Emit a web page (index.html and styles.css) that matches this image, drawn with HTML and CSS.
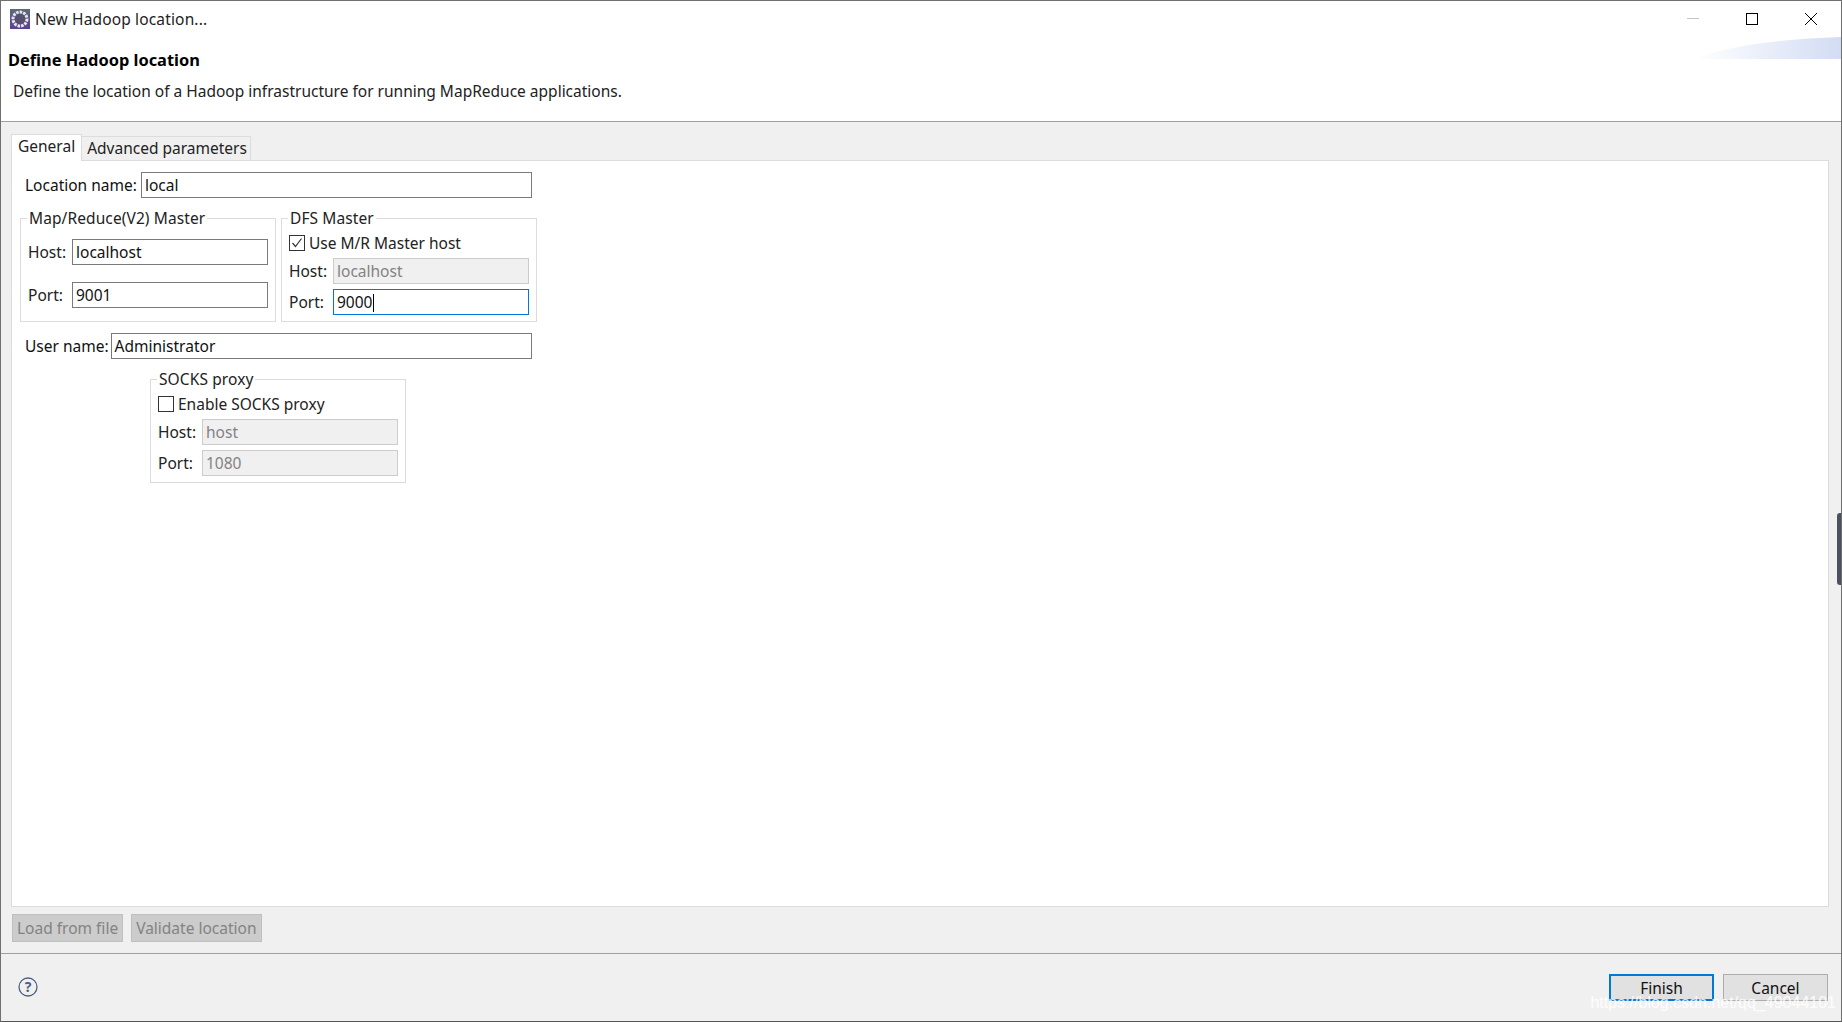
FILE: index.html
```html
<!DOCTYPE html>
<html>
<head>
  <meta charset="UTF-8">
  <title>New Hadoop location...</title>
  <link rel="stylesheet" href="styles.css">
</head>
<body>
  <div class="window">
    <div class="titlebar">
      <svg class="app-icon" width="20" height="20" viewBox="0 0 20 20">
        <defs>
          <linearGradient id="iconBg" x1="0" y1="0" x2="0" y2="1">
            <stop offset="0" stop-color="#5d6a78"/>
            <stop offset="1" stop-color="#5b3f96"/>
          </linearGradient>
        </defs>
        <rect width="20" height="20" fill="url(#iconBg)"/>
        <circle cx="10" cy="10" r="7" fill="none" stroke="#e8e8e8" stroke-width="3" stroke-dasharray="2.6 1"/>
        <circle cx="10" cy="10" r="5" fill="#56506e"/>
      </svg>
      <span class="title-text">New Hadoop location...</span>
      <div class="window-controls">
        <svg class="win-btn" width="14" height="14" viewBox="0 0 14 14"><path d="M1 6.5H13" stroke="#c4c4c4" fill="none"/></svg>
        <svg class="win-btn" width="14" height="14" viewBox="0 0 14 14"><rect x="1.5" y="1.5" width="11" height="11" stroke="#000" fill="none"/></svg>
        <svg class="win-btn" width="14" height="14" viewBox="0 0 14 14"><path d="M1 1L13 13M13 1L1 13" stroke="#000" fill="none"/></svg>
      </div>
    </div>

    <div class="header">
      <svg class="banner" width="146" height="22" viewBox="0 0 146 22">
        <defs>
          <linearGradient id="bannerBg" x1="0" y1="0" x2="1" y2="0">
            <stop offset="0" stop-color="#fff"/>
            <stop offset="1" stop-color="#d2dcf3"/>
          </linearGradient>
        </defs>
        <path d="M0 22C30 9 85 2 146 0V22Z" fill="url(#bannerBg)"/>
      </svg>
      <div class="heading">Define Hadoop location</div>
      <div class="description">Define the location of a Hadoop infrastructure for running MapReduce applications.</div>
    </div>

    <div class="content">
      <div class="tabs">
        <div class="tab active">General</div>
        <div class="tab">Advanced parameters</div>
      </div>

      <div class="panel">
        <div class="form">
          <div class="row">
            <span class="row-label">Location name:</span>
            <div class="field">local</div>
          </div>

          <div class="groups">
            <fieldset class="group mr-group">
              <legend>Map/Reduce(V2) Master</legend>
              <div class="group-row">
                <span class="group-label">Host:</span>
                <div class="field">localhost</div>
              </div>
              <div class="group-row">
                <span class="group-label">Port:</span>
                <div class="field">9001</div>
              </div>
            </fieldset>

            <fieldset class="group dfs-group">
              <legend>DFS Master</legend>
              <div class="check-row">
                <span class="check">
                  <svg width="12" height="12" viewBox="0 0 12 12"><path d="M1.5 6L4.5 9.5L10.5 1.5" stroke="#333" stroke-width="1.2" fill="none"/></svg>
                </span>
                Use M/R Master host
              </div>
              <div class="group-row">
                <span class="group-label">Host:</span>
                <div class="field disabled">localhost</div>
              </div>
              <div class="group-row">
                <span class="group-label">Port:</span>
                <div class="field focused">9000<span class="caret"></span></div>
              </div>
            </fieldset>
          </div>

          <div class="row user-row">
            <span class="row-label">User name:</span>
            <div class="field">Administrator</div>
          </div>

          <fieldset class="group socks-group">
            <legend>SOCKS proxy</legend>
            <div class="check-row">
              <span class="check"></span>
              Enable SOCKS proxy
            </div>
            <div class="group-row">
              <span class="group-label">Host:</span>
              <div class="field disabled">host</div>
            </div>
            <div class="group-row">
              <span class="group-label">Port:</span>
              <div class="field disabled">1080</div>
            </div>
          </fieldset>
        </div>
      </div>

      <div class="actions">
        <button class="action-btn">Load from file</button>
        <button class="action-btn">Validate location</button>
      </div>
    </div>

    <div class="footer">
      <svg class="help" width="20" height="20" viewBox="0 0 20 20">
        <circle cx="10" cy="10" r="9" fill="none" stroke="#4d6185" stroke-width="1.3"/>
        <text x="10" y="15" text-anchor="middle" class="help-mark">?</text>
      </svg>
      <div class="footer-buttons">
        <button class="dialog-btn default">Finish</button>
        <button class="dialog-btn">Cancel</button>
      </div>
    </div>

    <div class="scroll-handle"></div>
    <div class="watermark">https://blog.csdn.net/qq_49044101</div>
  </div>
</body>
</html>
```

FILE: styles.css
```css
* {
  box-sizing: border-box;
}

html, body {
  height: 100%;
}

body {
  margin: 0;
  overflow: hidden;
  background-color: #fff;
  color: #111;
  font-family: "Noto Sans", "Open Sans", sans-serif;
  font-size: 15.5px;
}

.window {
  position: relative;
  display: flex;
  flex-direction: column;
  height: 1022px;
  border-top: 1px solid #707070;
  border-left: 1px solid #707070;
  border-right: 1px solid #707070;
  border-bottom: 1px solid #555;
}

.titlebar {
  display: flex;
  align-items: center;
  height: 36px;
  padding-left: 9px;
  flex: none;
}

.app-icon {
  margin-right: 5px;
}

.title-text {
  letter-spacing: 0.15px;
  color: #222;
}

.window-controls {
  display: flex;
  gap: 45px;
  margin-left: auto;
  margin-right: 23px;
}

.header {
  position: relative;
  flex: none;
  height: 85px;
  border-bottom: 1px solid #a0a0a0;
}

.banner {
  position: absolute;
  top: 0;
  right: 0;
}

.heading {
  padding: 12px 0 0 7px;
  font-weight: bold;
  font-size: 16.4px;
  line-height: 21px;
  color: #000;
}

.description {
  padding: 11px 0 0 12px;
  line-height: 21px;
  color: #222;
}

.content {
  flex: 1;
  display: flex;
  flex-direction: column;
  background-color: #f0f0f0;
  padding: 12px 12px 0 10px;
}

.tabs {
  display: flex;
  align-items: flex-end;
  flex: none;
  height: 27px;
  margin-bottom: -1px;
  position: relative;
}

.tab {
  height: 25px;
  padding: 0 3px 0 5px;
  line-height: 23px;
  border: 1px solid #dcdcdc;
  border-left: none;
  border-bottom: none;
  color: #222;
}

.tab.active {
  height: 27px;
  padding: 0 6px;
  line-height: 22px;
  background-color: #fff;
  border-left: 1px solid #dcdcdc;
}

.panel {
  flex: 1;
  background-color: #fff;
  border: 1px solid #dcdcdc;
  padding: 11px 0 0 8px;
}

.form {
  width: 517px;
}

.row {
  display: flex;
  align-items: center;
  gap: 4px;
  height: 26px;
  padding: 0 5px;
}

.row .field {
  flex: 1;
}

.field {
  height: 26px;
  padding: 0 3px;
  line-height: 24px;
  border: 1px solid #7a7a7a;
  background-color: #fff;
  color: #111;
  white-space: nowrap;
}

.field.disabled {
  background-color: #f0f0f0;
  border-color: #ccc;
  color: #838383;
}

.field.focused {
  border-color: #0078d7;
}

.caret {
  display: inline-block;
  width: 1px;
  height: 18px;
  margin-left: 1px;
  vertical-align: -4px;
  background-color: #000;
}

.groups {
  display: flex;
  gap: 5px;
  margin-top: 10px;
}

.group {
  margin: 0;
  min-width: 0;
  width: 256px;
  border: 1px solid #dcdcdc;
  padding: 0 7px;
}

.group legend {
  margin-left: -1px;
  padding: 0 2px;
  height: 20px;
  line-height: 20px;
  letter-spacing: 0.1px;
  color: #222;
}

.group-row {
  display: flex;
  align-items: center;
}

.group-row .field {
  flex: 1;
}

.group-label {
  flex: none;
  width: 44px;
  color: #222;
}

.mr-group {
  padding-top: 11px;
  padding-bottom: 13px;
}

.mr-group .group-row + .group-row {
  margin-top: 17px;
}

.dfs-group {
  padding-top: 7px;
  padding-bottom: 6px;
}

.dfs-group .group-row,
.socks-group .group-row {
  margin-top: 7px;
}

.dfs-group .group-row + .group-row,
.socks-group .group-row + .group-row {
  margin-top: 5px;
}

.socks-group {
  margin: 10px 0 0 130px;
  padding-top: 7px;
  padding-bottom: 6px;
}

.check-row {
  display: flex;
  align-items: center;
  gap: 4px;
  height: 16px;
  color: #222;
}

.check {
  display: flex;
  align-items: center;
  justify-content: center;
  width: 16px;
  height: 16px;
  border: 1px solid #333;
  background-color: #fff;
}

.user-row {
  gap: 2px;
  margin-top: 11px;
}

.actions {
  flex: none;
  display: flex;
  gap: 8px;
  height: 46px;
  padding: 7px 0 0 1px;
}

.action-btn {
  height: 28px;
  padding: 0 4px;
  background-color: #ccc;
  border: 1px solid #bfbfbf;
  color: #838383;
  font-family: inherit;
  font-size: 15.5px;
}

.footer {
  flex: none;
  display: flex;
  align-items: flex-start;
  justify-content: space-between;
  height: 68px;
  background-color: #f0f0f0;
  border-top: 1px solid #a0a0a0;
  padding: 23px 13px 0 17px;
}

.help-mark {
  font-size: 14px;
  font-weight: bold;
  fill: #4d6185;
}

.footer-buttons {
  display: flex;
  gap: 9px;
  margin-top: -3px;
}

.dialog-btn {
  width: 105px;
  height: 27px;
  padding: 0;
  background-color: #e1e1e1;
  border: 1px solid #adadad;
  color: #111;
  font-family: inherit;
  font-size: 15.5px;
}

.dialog-btn.default {
  border: 2px solid #0078d7;
}

.scroll-handle {
  position: absolute;
  top: 512px;
  right: 0;
  width: 4px;
  height: 72px;
  border-radius: 3px 0 0 3px;
  background-color: #4a5060;
}

/* sits across the dialog buttons, same as in the screenshot */
.watermark {
  position: absolute;
  right: 5px;
  bottom: 9px;
  font-family: "Liberation Sans", Arial, sans-serif;
  font-size: 16px;
  color: rgba(255, 255, 255, 0.7);
  text-shadow: 0 0 1px rgba(255, 255, 255, 0.5);
  white-space: nowrap;
}
```
